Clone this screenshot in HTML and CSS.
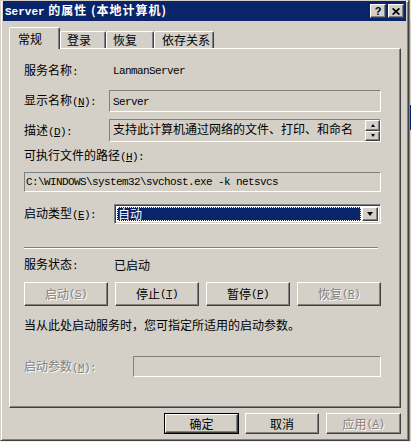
FILE: index.html
```html
<!DOCTYPE html>
<html lang="zh-CN">
<head>
<meta charset="utf-8">
<title>Server 的属性</title>
<link rel="stylesheet" href="styles.css">
</head>
<body>
<div class="screen">
  <div class="window">
    <div class="titlebar">
      <span class="title"><span class="tl">Server</span> 的属性 (本地计算机)</span>
      <div class="capbtns">
        <span class="cap raised help">?</span>
        <span class="cap raised">
          <svg width="8" height="7" viewBox="0 0 8 7"><path d="M0.6 0.4 L7.4 6.6 M7.4 0.4 L0.6 6.6" stroke="#000" stroke-width="1.7" fill="none"/></svg>
        </span>
      </div>
    </div>
    <div class="body">
      <div class="tabs">
        <div class="tab sel t1">常规</div>
        <div class="tab t2">登录</div>
        <div class="tab t3">恢复</div>
        <div class="tab t4">依存关系</div>
      </div>
      <div class="panel">
        <div class="row r1">
          <span class="lab wa">服务名称<span class="m">:</span></span>
          <span class="m">LanmanServer</span>
        </div>
        <div class="row r2">
          <span class="lab wb">显示名称<span class="m">(<u>N</u>):</span></span>
          <div class="edit top"><span class="m">Server</span></div>
        </div>
        <div class="row r3">
          <span class="lab wb">描述<span class="m">(<u>D</u>):</span></span>
          <div class="edit desc">
            <span class="desctext">支持此计算机通过网络的文件、打印、和命名</span>
            <div class="spin">
              <span class="sbtn raised"><i class="up"></i></span>
              <span class="sbtn raised"><i class="down"></i></span>
            </div>
          </div>
        </div>
        <div class="row r4">
          <span class="lab">可执行文件的路径<span class="m">(<u>H</u>):</span></span>
        </div>
        <div class="row r5">
          <div class="edit path"><span class="m">C:\WINDOWS\system32\svchost.exe -k netsvcs</span></div>
        </div>
        <div class="row r6">
          <span class="lab wc">启动类型<span class="m">(<u>E</u>):</span></span>
          <div class="combo">
            <span class="selval"><span>自动</span></span>
            <span class="dd raised"><i class="ddarrow"></i></span>
          </div>
        </div>
        <div class="sep"></div>
        <div class="row r8">
          <span class="lab wc">服务状态<span class="m">:</span></span>
          <span>已启动</span>
        </div>
        <div class="row r9">
          <span class="btn raised dis">启动<span class="m">(<u>S</u>)</span></span>
          <span class="btn raised">停止<span class="m">(<u>T</u>)</span></span>
          <span class="btn raised">暂停<span class="m">(<u>P</u>)</span></span>
          <span class="btn raised dis">恢复<span class="m">(<u>R</u>)</span></span>
        </div>
        <div class="row r10">
          <span>当从此处启动服务时，您可指定所适用的启动参数。</span>
        </div>
        <div class="row r11">
          <span class="lab wd dis">启动参数<span class="m">(<u>M</u>):</span></span>
          <div class="edit param"></div>
        </div>
      </div>
      <div class="actions">
        <span class="defbtn"><span class="btn raised">确定</span></span>
        <span class="btn raised b2">取消</span>
        <span class="btn raised dis">应用<span class="m">(<u>A</u>)</span></span>
      </div>
    </div>
  </div>
  <div class="side"></div>
</div>
<div class="under"></div>
</body>
</html>
```
FILE: styles.css
```css
* { box-sizing: border-box; }
html, body { margin: 0; padding: 0; }
body {
  width: 411px;
  height: 444px;
  overflow: hidden;
  background: #ffffff;
  color: #000;
  font-family: "Noto Sans CJK SC", sans-serif;
  font-size: 12px;
  line-height: 14px;
}
.screen { display: flex; height: 441px; }
.side {
  flex: 1;
  background: linear-gradient(to bottom, #ece9d8 0 20px, #d4d0c8 20px 105px, #0a246a 105px 130px, #d4d0c8 130px);
  border-left: 1px solid #808080;
}
.under { height: 3px; background: #ffffff; border-top: 1px solid #f0f0f0; }

.window {
  width: 409px;
  height: 441px;
  flex: none;
  background: #d4d0c8;
  border: 1px solid;
  border-color: #d4d0c8 #404040 #404040 #d4d0c8;
  box-shadow: inset 1px 1px #fff, inset -1px -1px #808080;
  padding: 0 2px 2px 2px;
  display: flex;
  flex-direction: column;
}
.titlebar {
  height: 20px;
  flex: none;
  background: #0a246a;
  color: #fff;
  display: flex;
  align-items: center;
  padding: 0 2px 0 2px;
}
.title { flex: 1; font-weight: bold; white-space: nowrap; font-size: 12px; letter-spacing: 1px; }
.tl { font-family: "Liberation Mono", monospace; font-size: 11px; letter-spacing: 0; }
.capbtns { display: flex; gap: 2px; }
.raised {
  background: #d4d0c8;
  border: 1px solid;
  border-color: #fff #404040 #404040 #fff;
  box-shadow: inset -1px -1px #808080;
}
.cap {
  width: 16px;
  height: 14px;
  display: flex;
  align-items: center;
  justify-content: center;
  color: #000;
}
.help { font-family: "Liberation Sans", sans-serif; font-weight: bold; font-size: 11px; line-height: 12px; }

.body { padding: 6px 5px 0 6px; display: flex; flex-direction: column; }
.tabs { display: flex; height: 21px; align-items: flex-end; }
.tab {
  height: 17px;
  border: 1px solid;
  border-bottom: none;
  border-color: #fff #404040 transparent #fff;
  box-shadow: inset -1px 0 #808080;
  border-radius: 2px 2px 0 0;
  padding-left: 6px;
  line-height: 16px;
  white-space: nowrap;
}
.tab.sel {
  height: 22px;
  margin-bottom: -1px;
  position: relative;
  z-index: 1;
  background: #d4d0c8;
  padding-left: 8px;
  padding-top: 3px;
}
.t1 { width: 51px; }
.t2 { width: 46px; }
.t3 { width: 48px; }
.t4 { width: 60px; padding-left: 7px; }

.panel {
  height: 360px;
  flex: none;
  border: 1px solid;
  border-color: #fff #404040 #404040 #fff;
  box-shadow: inset -1px -1px #808080;
  padding: 0 19px 0 14px;
  display: flex;
  flex-direction: column;
}
.m {
  font-family: "Liberation Mono", monospace;
  font-size: 11px;
  letter-spacing: -0.6px;
}
.row { display: flex; align-items: center; flex: none; }
.lab { flex: none; white-space: nowrap; }
.wa { width: 89px; }
.wb { width: 85px; }
.wc { width: 90px; }
.wd { width: 109px; }

.r1 { margin-top: 13px; height: 18px; }
.r2 { margin-top: 10px; height: 22px; }
.r3 { margin-top: 7px; height: 23px; }
.r4 { margin-top: 6px; height: 16px; }
.r5 { margin-top: 8px; height: 20px; }
.r6 { margin-top: 12px; height: 20px; }
.r8 { margin-top: 8px; height: 16px; }
.r9 { margin-top: 9px; height: 24px; justify-content: space-between; }
.r10 { margin-top: 11px; height: 16px; }
.r11 { margin-top: 23px; height: 21px; }

.edit {
  flex: 1;
  align-self: stretch;
  border: 1px solid;
  border-color: #808080 #fff #fff #808080;
  min-width: 0;
}
.edit.top { padding: 2px 3px; }
.edit.desc { display: flex; padding: 0 0 0 3px; }
.desctext { flex: 1; white-space: nowrap; padding-top: 2px; }
.spin { flex: none; width: 15px; display: flex; flex-direction: column; }
.sbtn { height: 11px; display: flex; align-items: center; justify-content: center; }
.up, .down { width: 0; height: 0; border-left: 2.5px solid transparent; border-right: 2.5px solid transparent; }
.up { border-bottom: 3px solid #000; }
.down { border-top: 3px solid #000; }
.edit.path { display: flex; align-items: center; padding: 0 0 0 1px; white-space: nowrap; }

.combo {
  flex: 1;
  align-self: stretch;
  border: 1px solid;
  border-color: #808080 #fff #fff #808080;
  box-shadow: inset 1px 1px #404040, inset -1px -1px #d4d0c8;
  background: #fff;
  padding: 2px;
  display: flex;
}
.selval {
  flex: 1;
  margin-right: 1px;
  background: #0a246a;
  color: #fff;
  outline: 1px dotted #ffffff;
  outline-offset: -1px;
  padding-left: 1px;
  display: flex;
  align-items: center;
}
.dd { width: 16px; display: flex; align-items: center; justify-content: center; }
.ddarrow { width: 0; height: 0; border-left: 3.5px solid transparent; border-right: 3.5px solid transparent; border-top: 4px solid #000; }

.sep {
  flex: none;
  margin-top: 23px;
  margin-right: 3px;
  height: 2px;
  border-top: 1px solid #808080;
  border-bottom: 1px solid #fff;
}

.btn {
  display: flex;
  align-items: center;
  justify-content: center;
  white-space: nowrap;
}
.r9 .btn { width: 84px; height: 24px; }
.dis { color: #808080; text-shadow: 1px 1px 0 #fff; }

.actions {
  flex: none;
  margin-top: 5px;
  display: flex;
  justify-content: flex-end;
  gap: 6px;
}
.actions .btn { width: 75px; height: 21px; }
.actions .b2 { width: 74px; margin-right: 1px; }
.defbtn { display: flex; border: 1px solid #000; }
.defbtn .btn { width: 73px; height: 19px; }
```
